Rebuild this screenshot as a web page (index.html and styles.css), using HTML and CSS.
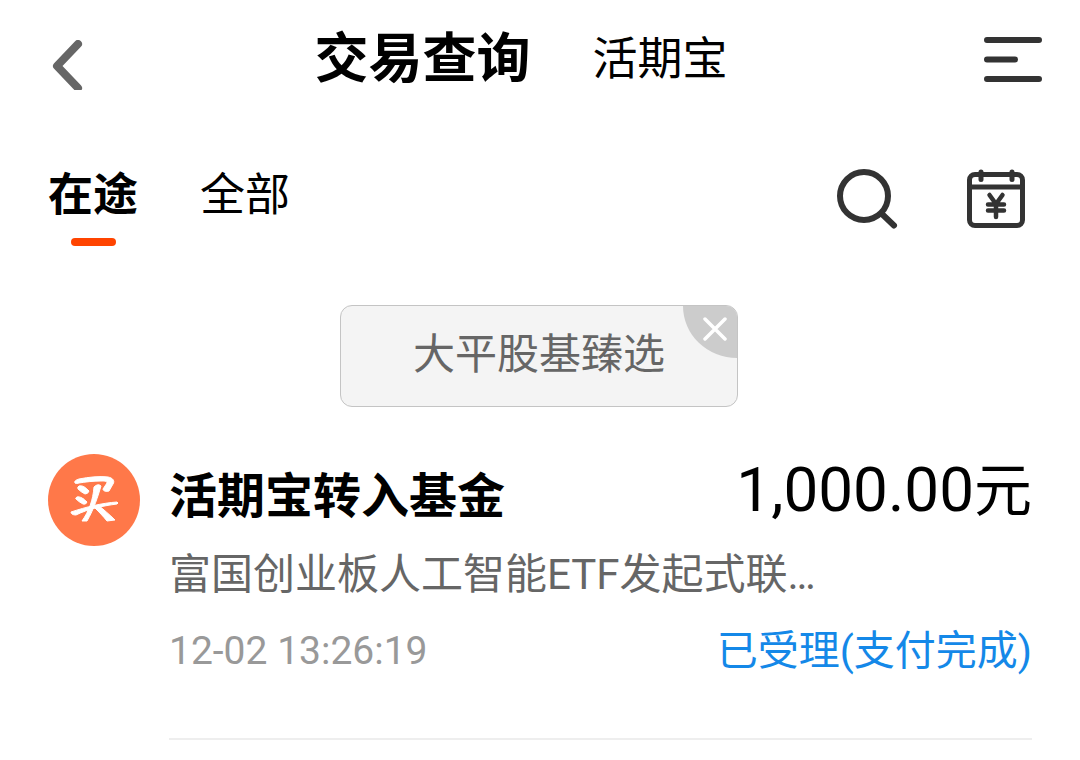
FILE: index.html
```html
<!DOCTYPE html>
<html lang="zh-CN">
<head>
<meta charset="utf-8">
<meta name="viewport" content="width=device-width, initial-scale=1">
<title>交易查询</title>
<link rel="stylesheet" href="styles.css">
</head>
<body>
<header class="topbar">
  <button class="icon-btn back" type="button" aria-label="返回">
    <svg width="36" height="50" viewBox="0 0 36 50" fill="none" stroke="#666" stroke-width="8" stroke-linecap="round" stroke-linejoin="round"><path d="M30 4 9 26 30 48"/></svg>
  </button>
  <nav class="sections">
    <a class="section current" href="#trade">交易查询</a>
    <a class="section" href="#wallet">活期宝</a>
  </nav>
  <button class="icon-btn menu" type="button" aria-label="菜单">
    <svg width="58" height="48" viewBox="0 0 58 48" fill="none" stroke="#333" stroke-width="6" stroke-linecap="round"><path d="M3 4H55M3 23.500H31M3 43H55"/></svg>
  </button>
</header>
<div class="filters">
  <nav class="tabs">
    <a class="tab active" href="#pending">在途</a>
    <a class="tab" href="#all">全部</a>
  </nav>
  <div class="tools">
    <button class="icon-btn" type="button" aria-label="搜索">
      <svg width="62" height="62" viewBox="0 0 62 62" fill="none" stroke="#333" stroke-width="6" stroke-linecap="round"><circle cx="28" cy="28" r="24"/><path d="M46 46 58 57.500"/></svg>
    </button>
    <button class="icon-btn" type="button" aria-label="交易日历">
      <svg width="60" height="62" viewBox="0 0 60 62" fill="none" stroke="#333" stroke-width="5" stroke-linecap="round"><rect x="3.500" y="6.500" width="53" height="51" rx="5.500"/><path d="M4 19H56M15 4V11.500M46 4V11.500"/><path stroke-width="4.500" d="M23.500 27 30 36 36.500 27M22 36.500H38M22 42.500H38M30 36V49"/></svg>
    </button>
  </div>
</div>
<main>
  <div class="chip-row">
    <div class="chip">
      <span>大平股基臻选</span>
      <button class="chip-close" type="button" aria-label="移除">
        <svg width="24" height="24" viewBox="0 0 24 24" stroke="#fff" stroke-width="3.500" stroke-linecap="round"><path d="M2 2 22 22M22 2 2 22"/></svg>
      </button>
    </div>
  </div>
  <article class="record">
    <svg class="badge" width="92" height="92" viewBox="0 0 92 92" fill="none" role="img" aria-label="买">
      <circle cx="46" cy="46" r="46" fill="#ff7849"/>
      <g fill="#fff" stroke="#fff" stroke-linejoin="round">
        <path d="M27 29C26 27 28 26 31 25 41 23 51 22 60 23 65 24 67 27 65 30L61 37C58 38 55 37 55 35L59 29C59 27 56 27 53 27 45 27 37 28 31 29Q28 30 27 29Z"/>
        <path d="M31 32C35 31 38 34 41 37Q40 40 37 40 33 38 30 35 29 33 31 32Z"/>
        <path d="M29 43C32 42 36 45 39 48Q38 51 35 50 31 48 28 45 27 44 29 43Z"/>
        <path d="M23 58C38 53 54 49 69 48Q71 49 69 50C54 52 40 55 28 61Q23 61 23 58Z"/>
        <path d="M46 33Q50 29 53 32C50 42 46 55 39 67L34 67C41 57 45 46 46 33Z"/>
        <path d="M50 51C55 55 62 61 67 66L59 67C55 62 51 58 47 54Z"/>
      </g>
    </svg>
    <div class="details">
      <div class="line">
        <h2 class="name">活期宝转入基金</h2>
        <span class="amount">1,000.00<span class="unit">元</span></span>
      </div>
      <p class="fund">富国创业板人工智能ETF发起式联…</p>
      <div class="line meta">
        <time class="time">12-02 13:26:19</time>
        <span class="status">已受理(支付完成)</span>
      </div>
    </div>
  </article>
</main>
</body>
</html>
```
FILE: styles.css
```css
* {
  box-sizing: border-box;
}

body {
  margin: 0;
  background: #fff;
  color: #000;
  font-family: Roboto, "Noto Sans CJK SC", sans-serif;
}

a {
  color: inherit;
  text-decoration: none;
}

svg {
  display: block;
}

.icon-btn {
  padding: 0;
  border: 0;
  background: none;
  cursor: pointer;
}

.topbar {
  display: grid;
  grid-template-columns: 1fr auto 1fr;
  align-items: center;
  height: 120px;
  padding-right: 38px;
}

.back {
  justify-self: start;
  margin: 10px 0 0 48px;
}

.menu {
  justify-self: end;
}

.sections {
  display: flex;
  align-items: center;
  gap: 62px;
}

.section {
  font-size: 45px;
  line-height: 60px;
}

.section.current {
  font-size: 54px;
  font-weight: 700;
}

.filters {
  display: flex;
  justify-content: space-between;
  align-items: flex-start;
  padding: 48px 54px 0 48px;
}

.tabs {
  display: flex;
  gap: 62px;
}

.tab {
  display: flex;
  flex-direction: column;
  align-items: center;
  gap: 14px;
  font-size: 45px;
  line-height: 56px;
}

.tab.active {
  font-weight: 700;
}

.tab.active::after {
  content: "";
  width: 45px;
  height: 8px;
  border-radius: 4px;
  background: #ff4400;
}

.tools {
  display: flex;
  gap: 68px;
}

.chip-row {
  display: flex;
  justify-content: center;
  padding: 59px 2px 0 0;
}

.chip {
  position: relative;
  overflow: hidden;
  padding: 20px 72px 22px;
  border: 1px solid #c4c4c4;
  border-radius: 12px;
  background: #f4f4f4;
  color: #666;
  font-size: 42px;
  line-height: 58px;
}

.chip-close {
  position: absolute;
  top: 0;
  right: 0;
  display: grid;
  place-items: center;
  width: 54px;
  height: 52px;
  padding: 0 0 6px 10px;
  border: 0;
  border-radius: 0 0 0 100%;
  background: #ccc;
  cursor: pointer;
}

.record {
  display: flex;
  align-items: flex-start;
  gap: 29px;
  padding: 47px 48px 0;
}

.badge {
  flex: none;
}

.details {
  flex: 1;
  min-width: 0;
  padding-bottom: 57px;
  border-bottom: 2px solid #eee;
}

.line {
  display: flex;
  justify-content: space-between;
  align-items: center;
}

.name {
  margin: 0;
  padding-top: 12px;
  font-size: 48px;
  line-height: 60px;
}

.amount {
  font-size: 62px;
  line-height: 72px;
}

.unit {
  font-size: 58px;
}

.fund {
  margin: 18px 0 0;
  overflow: hidden;
  color: #666;
  font-size: 42px;
  line-height: 60px;
  text-overflow: ellipsis;
  white-space: nowrap;
}

.meta {
  padding-top: 16px;
  line-height: 60px;
}

.time {
  color: #999;
  font-size: 39px;
}

.status {
  color: #1488e8;
  font-size: 41px;
}
```
